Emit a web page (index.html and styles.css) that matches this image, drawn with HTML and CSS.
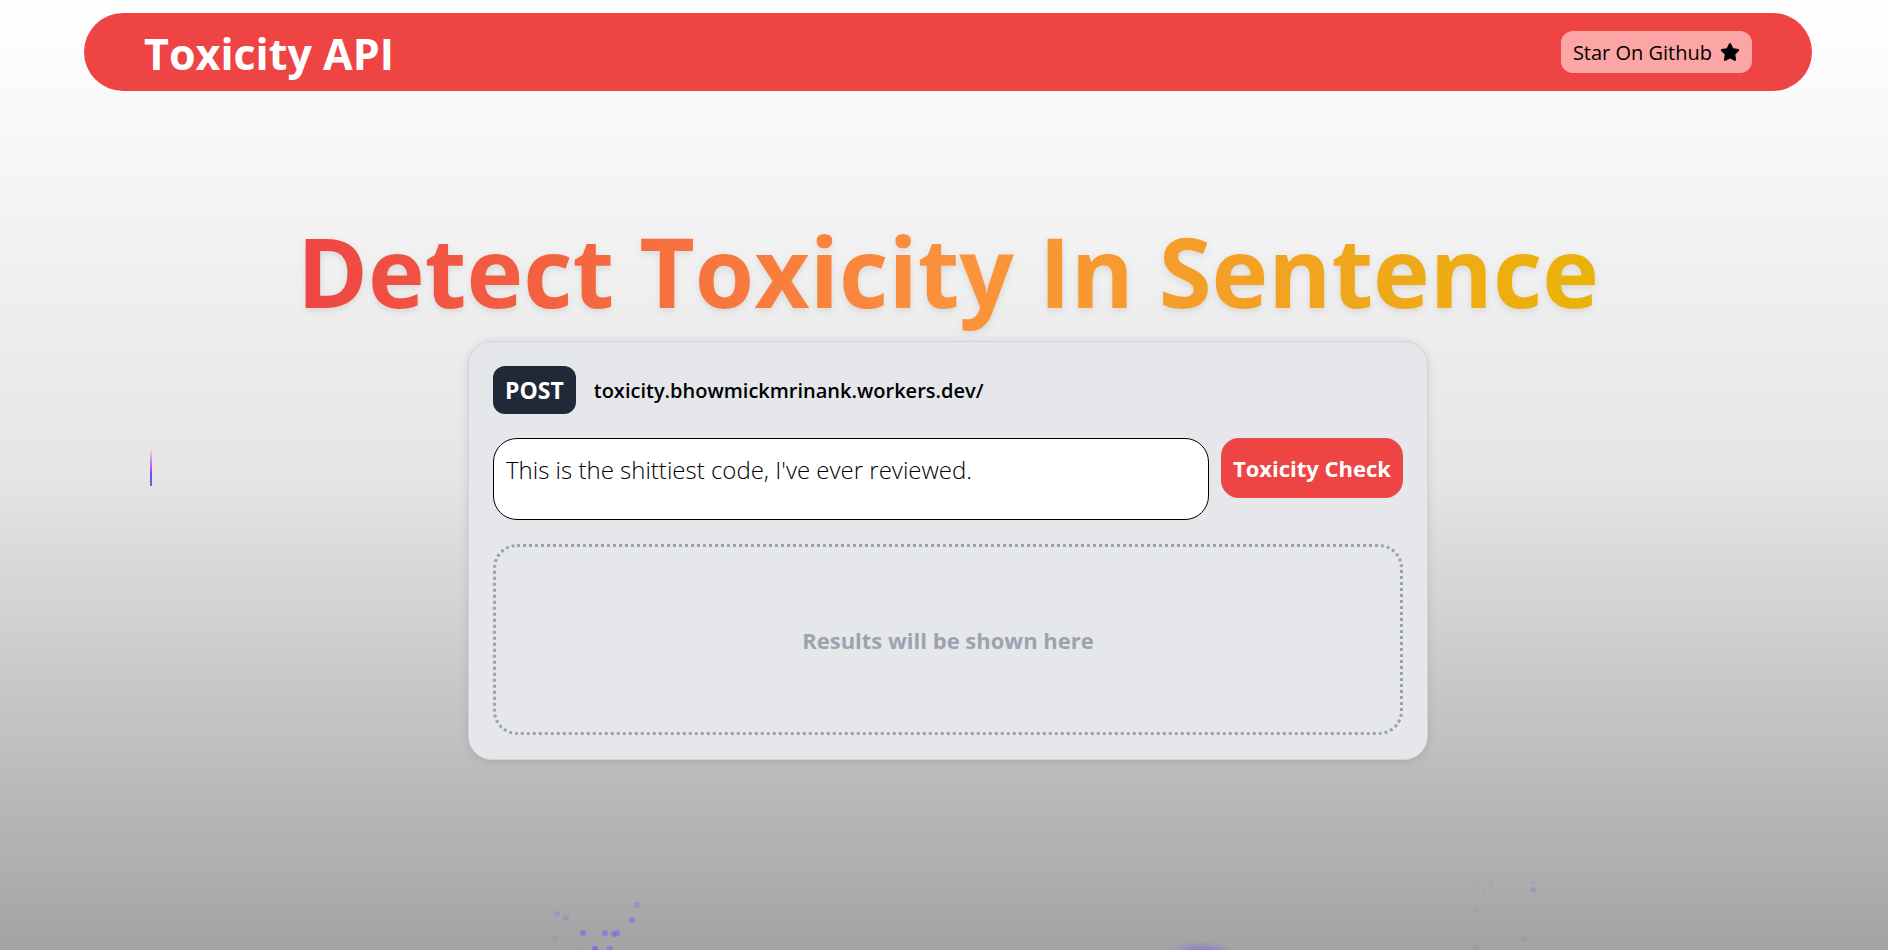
FILE: index.html
```
<!DOCTYPE html>
<html lang="en">
<head>
<meta charset="utf-8">
<meta name="viewport" content="width=device-width, initial-scale=1">
<title>Toxicity API</title>
<link rel="stylesheet" href="styles.css">
</head>
<body>
<svg class="fireworks" viewBox="0 0 1888 950" preserveAspectRatio="none" aria-hidden="true">
  <defs>
    <linearGradient id="trail" x1="0" y1="0" x2="0" y2="1">
      <stop offset="0" stop-color="#c026d3" stop-opacity="0"/>
      <stop offset=".5" stop-color="#b044dc" stop-opacity=".85"/>
      <stop offset=".7" stop-color="#7448ee"/>
      <stop offset="1" stop-color="#6a5cf6"/>
    </linearGradient>
    <radialGradient id="glow">
      <stop offset="0" stop-color="#6f66dc"/>
      <stop offset=".5" stop-color="#7f7bd0" stop-opacity=".6"/>
      <stop offset="1" stop-color="#8886c8" stop-opacity="0"/>
    </radialGradient>
  </defs>
  <rect x="150" y="449" width="2" height="37" fill="url(#trail)"/>
  <g fill="#7c6af0">
    <circle cx="557" cy="914" r="3" opacity=".25"/>
    <circle cx="566" cy="918" r="3" opacity=".25"/>
    <circle cx="637" cy="905" r="3" opacity=".35"/>
    <circle cx="632" cy="920" r="3" opacity=".6"/>
    <circle cx="583" cy="933" r="3" opacity=".7"/>
    <circle cx="605" cy="933" r="3" opacity=".65"/>
    <circle cx="614" cy="934" r="3" opacity=".65"/>
    <circle cx="617" cy="933" r="3" opacity=".65"/>
    <circle cx="555" cy="938" r="3" opacity=".18"/>
    <circle cx="595" cy="949" r="3" opacity=".9"/>
    <circle cx="610" cy="949" r="3" opacity=".7"/>
    <circle cx="577" cy="952" r="3" opacity=".4"/>
    <circle cx="1476" cy="882" r="2" opacity=".06"/>
    <circle cx="1491" cy="883" r="3" opacity=".1"/>
    <circle cx="1484" cy="892" r="2" opacity=".08"/>
    <circle cx="1533" cy="882" r="2" opacity=".1"/>
    <circle cx="1533" cy="890" r="3" opacity=".3"/>
    <circle cx="1476" cy="909" r="3" opacity=".08"/>
    <circle cx="1524" cy="939" r="3" opacity=".15"/>
    <circle cx="1476" cy="947" r="3" opacity=".15"/>
  </g>
  <ellipse cx="1201" cy="954" rx="36" ry="13" fill="url(#glow)"/>
</svg>
<header class="navbar">
  <span class="brand">Toxicity API</span>
  <a class="star-link" href="#">Star On Github
    <svg class="star" viewBox="0 0 576 512" aria-hidden="true"><path d="M316.900 18C311.600 7 300.400 0 288.100 0s-23.400 7-28.800 18L195 150.300 51.400 171.500c-12 1.800-22 10.200-25.700 21.700s-.7 24.200 7.900 32.700L137.800 329 113.200 474.700c-2 12 3 24.200 12.900 31.300s23 8 33.800 2.300l128.300-68.500 128.300 68.500c10.800 5.700 23.900 4.900 33.800-2.300s14.900-19.300 12.900-31.300L438.500 329 542.700 225.900c8.600-8.500 11.700-21.200 7.900-32.700s-13.700-19.900-25.700-21.700L381.200 150.300 316.900 18z"/></svg>
  </a>
</header>
<main class="content">
  <h1 class="title">Detect Toxicity In Sentence</h1>
  <section class="card">
    <div class="endpoint">
      <span class="method">POST</span>
      <span class="url">toxicity.bhowmickmrinank.workers.dev/</span>
    </div>
    <form class="check">
      <textarea class="sentence" aria-label="Sentence">This is the shittiest code, I've ever reviewed.</textarea>
      <button class="submit" type="button">Toxicity Check</button>
    </form>
    <div class="results"><p>Results will be shown here</p></div>
  </section>
</main>
</body>
</html>
```
FILE: styles.css
```
* { box-sizing: border-box; }

body {
  margin: 0;
  min-height: 100vh;
  padding: 13px 0 24px 8px;
  position: relative;
  overflow-x: hidden;
  font-family: "Segoe UI", "Open Sans", "Noto Sans", sans-serif;
  color: #000;
  background: linear-gradient(to bottom, #fff, #e5e5e5 50%, #a3a3a3);
}

.fireworks {
  position: absolute;
  inset: 0;
  width: 100%;
  height: 100%;
  pointer-events: none;
}

.navbar {
  position: relative;
  display: flex;
  align-items: center;
  justify-content: space-between;
  margin: 0 76px;
  min-height: 78px;
  padding: 0 60px;
  border-radius: 40px;
  background: #ef4444;
}

.brand {
  padding-top: 4px;
  font-size: 43px;
  line-height: 60px;
  font-weight: 700;
  color: #fff;
}

.star-link {
  display: flex;
  align-items: center;
  gap: 8px;
  height: 42px;
  padding: 0 12px;
  border-radius: 12px;
  background: #fca5a5;
  color: #000;
  font-size: 20px;
  font-weight: 500;
  text-decoration: none;
}

.star { width: 20px; height: 20px; }

.content {
  position: relative;
  display: flex;
  flex-direction: column;
  align-items: center;
  margin-top: 110px;
}

.title {
  margin: 0;
  font-size: 96px;
  line-height: 140px;
  font-weight: 700;
  white-space: nowrap;
  color: transparent;
  background: linear-gradient(to right, #ef4444, #fb923c, #eab308);
  background-clip: text;
  -webkit-background-clip: text;
  filter: drop-shadow(0 4px 3px rgb(0 0 0 / 4%)) drop-shadow(0 2px 4px rgb(0 0 0 / 6%));
}

.card {
  display: flex;
  flex-direction: column;
  gap: 24px;
  width: 100%;
  max-width: 960px;
  padding: 24px;
  border: 1px solid #d1d5db;
  border-radius: 24px;
  background: #e5e7eb;
  box-shadow: 0 1px 8px rgb(0 0 0 / 12%);
}

.endpoint { display: flex; align-items: center; gap: 18px; }

.method {
  padding: 0 12px;
  border-radius: 12px;
  background: #1f2937;
  color: #fff;
  font-size: 23px;
  line-height: 48px;
  font-weight: 700;
}

.url { font-size: 20px; font-weight: 600; }

.check { display: flex; align-items: flex-start; gap: 12px; margin: 0; }

.sentence {
  flex: 1;
  min-width: 0;
  height: 82px;
  padding: 12px;
  border: 1px solid #000;
  border-radius: 24px;
  resize: none;
  outline: none;
  overflow: hidden;
  background: #fff;
  color: #000;
  font: 300 24px/38px "Segoe UI", "Open Sans", "Noto Sans", sans-serif;
}

.submit {
  height: 60px;
  padding: 0 12px;
  border: 0;
  border-radius: 18px;
  background: #ef4444;
  color: #fff;
  font: 700 22px/36px "Segoe UI", "Open Sans", "Noto Sans", sans-serif;
}

.results {
  display: flex;
  align-items: center;
  justify-content: center;
  min-height: 191px;
  border: 3px dotted #9ca3af;
  border-radius: 24px;
  color: #9ca3af;
  font-size: 22px;
  font-weight: 700;
}

.results p { margin: 0; }
```
